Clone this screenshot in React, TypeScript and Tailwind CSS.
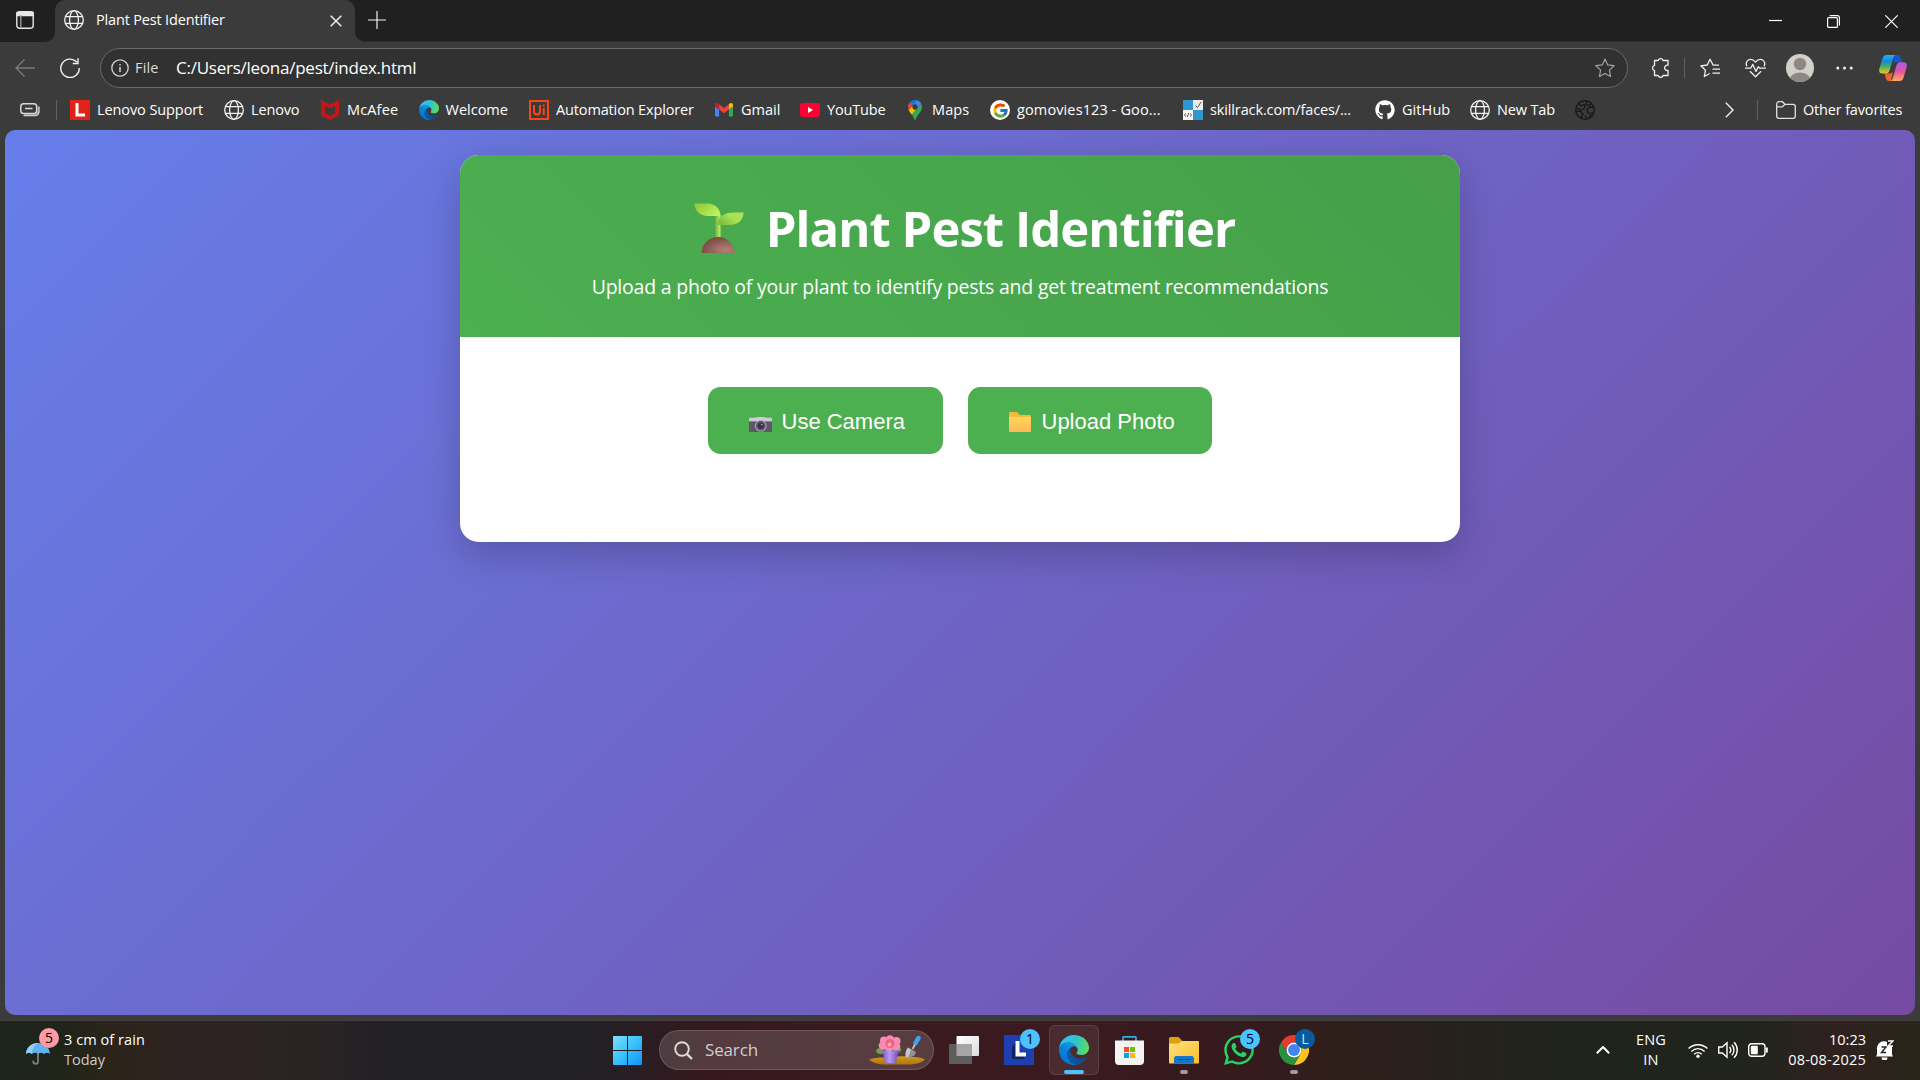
import React from "react";
import type { ReactNode } from "react";
import { FcGoogle } from "react-icons/fc";
import { FaGithub, FaWhatsapp } from "react-icons/fa";

function Label({ className = "", children }: { className?: string; children: ReactNode }) {
  return <span className={"whitespace-nowrap " + className}>{children}</span>;
}

function GlobeIcon() {
  return (
    <svg viewBox="0 0 20 20" className="size-5 shrink-0" fill="none" stroke="#f2f2f2" strokeWidth="1.3">
      <circle cx="10" cy="10" r="9.3" />
      <ellipse cx="10" cy="10" rx="4.4" ry="9.3" />
      <path d="M1.6 6.6h16.8M1.6 13.4h16.8" />
    </svg>
  );
}

function EdgeIcon({ className }: { className: string }) {
  return (
    <svg viewBox="0 0 256 256" className={className}>
      <defs>
        <linearGradient id="edgeA" x1="63" y1="178" x2="241" y2="178" gradientUnits="userSpaceOnUse">
          <stop offset="0" stopColor="#0c59a4" />
          <stop offset="1" stopColor="#114a8b" />
        </linearGradient>
        <linearGradient id="edgeB" x1="157" y1="100" x2="46" y2="221" gradientUnits="userSpaceOnUse">
          <stop offset="0" stopColor="#1b9de2" />
          <stop offset=".16" stopColor="#1595df" />
          <stop offset=".67" stopColor="#0680d7" />
          <stop offset="1" stopColor="#0078d4" />
        </linearGradient>
        <linearGradient id="edgeC" x1="20" y1="50" x2="250" y2="120" gradientUnits="userSpaceOnUse">
          <stop offset="0" stopColor="#35c1f1" />
          <stop offset=".45" stopColor="#2bc3d2" />
          <stop offset="1" stopColor="#5fdc5a" />
        </linearGradient>
      </defs>
      <path fill="url(#edgeA)" d="M231 190.5a93.7 93.7 0 0 1-10.5 4.7 101.9 101.9 0 0 1-35.9 6.5c-47.3 0-88.5-32.6-88.5-74.3a31.5 31.5 0 0 1 16.4-27.3c-42.8 1.8-53.8 46.4-53.8 72.5 0 73.9 68.1 81.4 82.8 81.4 7.9 0 19.8-2.3 27-4.6l1.3-.4a128.3 128.3 0 0 0 66.6-52.8 4 4 0 0 0-5.4-5.7z" />
      <path fill="url(#edgeB)" d="M105.7 241.4a79.2 79.2 0 0 1-22.7-21.3 80.7 80.7 0 0 1 29.5-120c3.2-1.5 8.5-4.1 15.6-4a32.4 32.4 0 0 1 25.7 13 31.9 31.9 0 0 1 6.3 18.7c0-.2 24.5-79.6-80-79.6-43.9 0-80 41.6-80 78.2a130.2 130.2 0 0 0 12.1 56 128 128 0 0 0 156.4 67 75.6 75.6 0 0 1-62.8-8z" />
      <path fill="url(#edgeC)" d="M152.3 148.9c-.8 1-3.3 2.5-3.3 5.6 0 2.6 1.7 5.1 4.7 7.2 14.4 10 41.5 8.7 41.6 8.7a59.6 59.6 0 0 0 30.3-8.3 61.4 61.4 0 0 0 30.4-52.9c.3-22.4-8-37.3-11.3-43.9C223.5 23.8 177.7 0 128 0A128 128 0 0 0 0 126.2c.5-36.5 36.8-66 80-66 3.5 0 23.5.3 42 10 16.3 8.6 24.9 19 30.9 29.2 6.1 10.7 7.2 24.2 7.2 29.5s-2.7 13.4-7.8 20z" />
    </svg>
  );
}

function GmailIcon() {
  return (
    <svg viewBox="52 42 88 66" className="w-[18px]">
      <path fill="#4285f4" d="M58 108h14V74L52 59v43c0 3.32 2.69 6 6 6" />
      <path fill="#34a853" d="M120 108h14c3.32 0 6-2.69 6-6V59l-20 15" />
      <path fill="#fbbc04" d="M120 48v26l20-15v-8c0-7.42-8.47-11.65-14.4-7.2" />
      <path fill="#ea4335" d="M72 74V48l24 18 24-18v26L96 92" />
      <path fill="#c5221f" d="M52 51v8l20 15V48l-5.6-4.2c-5.94-4.45-14.4-.22-14.4 7.2" />
    </svg>
  );
}

function MapsIcon() {
  return (
    <svg viewBox="0 0 92.3 132.3" className="h-5">
      <path fill="#1a73e8" d="M60.2 2.2C55.8.8 51 0 46.1 0 32 0 19.3 6.4 10.8 16.5l21.8 18.3L60.2 2.2z" />
      <path fill="#ea4335" d="M10.8 16.5C4.1 24.5 0 34.9 0 46.1c0 8.7 1.7 15.7 4.6 22l28-33.3-21.8-18.3z" />
      <path fill="#4285f4" d="M46.2 28.5c9.8 0 17.7 7.9 17.7 17.7 0 4.3-1.6 8.3-4.2 11.4 0 0 13.9-16.6 27.5-32.7-5.6-10.8-15.3-19-27-22.7L32.6 34.8c3.3-3.8 8.1-6.3 13.6-6.3" />
      <path fill="#fbbc04" d="M46.2 63.8c-9.8 0-17.7-7.9-17.7-17.7 0-4.3 1.5-8.3 4.1-11.3l-28 33.3c4.8 10.6 12.8 19.2 21 29.9l34.1-40.5c-3.3 3.9-8.1 6.3-13.5 6.3" />
      <path fill="#34a853" d="M59.1 109.2c15.4-24.1 33.3-35 33.3-63 0-7.7-1.9-14.9-5.2-21.3L25.6 98c2.6 3.4 5.3 7.3 7.9 11.3 9.4 14.5 6.8 23.1 12.8 23.1s3.4-8.7 12.8-23.2" />
    </svg>
  );
}

function Bookmark({ width, icon, children }: { width: string; icon: ReactNode; children?: ReactNode }) {
  return (
    <div className={"flex shrink-0 items-center gap-[7px] " + width}>
      <span className="flex size-5 shrink-0 items-center justify-center">{icon}</span>
      {children}
    </div>
  );
}

function TabStrip() {
  return (
    <div className="flex h-[42px] bg-[#3b3b3b]">
      <div className="flex w-[55px] items-start rounded-br-[10px] bg-[#202020] pt-[11px] pl-4">
        <svg viewBox="0 0 18 18" className="size-[18px]" fill="none" stroke="#e8e8e8" strokeWidth="1.4">
          <rect x=".8" y=".8" width="16.4" height="16.4" rx="2.6" />
          <path d="M1 1.5h16v3H1z" fill="#e8e8e8" />
          <path d="M4.8 4v13" stroke="#9a9a9a" />
        </svg>
      </div>
      <div className="w-[300px] bg-[#202020]">
        <div className="flex h-full items-center rounded-t-[10px] bg-[#3b3b3b] pr-[13px] pb-[3px] pl-[9px]">
          <GlobeIcon />
          <Label className="ml-3 text-[14.5px] tracking-[-0.17px] text-white">Plant Pest Identifier</Label>
          <svg viewBox="0 0 12 12" className="mt-[2px] ml-auto size-3" stroke="#f5f5f5" strokeWidth="1.4">
            <path d="M.7.7l10.6 10.6M11.3.7L.7 11.3" />
          </svg>
        </div>
      </div>
      <div className="flex flex-1 rounded-bl-[10px] border-b border-[#2e2e2e] bg-[#202020] pl-[13px]">
        <svg viewBox="0 0 18 18" className="mt-[11px] size-[18px]" stroke="#f0f0f0" strokeWidth="1.2">
          <path d="M9 0v18M0 9h18" />
        </svg>
        <div className="ml-auto flex pr-[22px]">
          <svg viewBox="0 0 13 13" className="mt-[14px] mr-[45px] size-[13px]" stroke="#fff" strokeWidth="1.2">
            <path d="M0 6.5h13" />
          </svg>
          <svg viewBox="0 0 13 13" className="mt-[15px] mr-[45px] size-[13px]" fill="none" stroke="#fff" strokeWidth="1.2">
            <rect x=".6" y="2.6" width="9.8" height="9.8" rx="1" />
            <path d="M2.6 .6h8a1.8 1.8 0 0 1 1.8 1.8v8" />
          </svg>
          <svg viewBox="0 0 13 13" className="mt-[15px] size-[13px]" stroke="#fff" strokeWidth="1.2">
            <path d="M.3.3l12.4 12.4M12.7.3L.3 12.7" />
          </svg>
        </div>
      </div>
    </div>
  );
}

function CopilotIcon() {
  return (
    <svg viewBox="0 0 28 26" className="h-[26px] w-7">
      <defs>
        <linearGradient id="copA" x1="0" y1="0" x2="0" y2="1">
          <stop offset="0" stopColor="#1fb2f5" />
          <stop offset=".35" stopColor="#1a86d8" />
          <stop offset=".65" stopColor="#4fb35a" />
          <stop offset="1" stopColor="#f4c81e" />
        </linearGradient>
        <linearGradient id="copB" x1="0" y1="0" x2="0" y2="1">
          <stop offset="0" stopColor="#a45cf0" />
          <stop offset=".5" stopColor="#e8569b" />
          <stop offset="1" stopColor="#ffab66" />
        </linearGradient>
      </defs>
      <path fill="#1556c8" d="M15 0h3.5c1.7 0 2.7 1 3.2 2.6L23.2 7h-5.5c-2 0-3 1-3.5 2.5z" />
      <path fill="#f0652f" d="M5.5 18.5h5.3c1.9 0 2.9-1 3.4-2.7L12 26h-2c-1.7 0-2.7-1-3.2-2.7z" />
      <path fill="url(#copA)" d="M7.5 0H17c-1.5.3-2.2 1.2-2.7 2.8L10.5 15.5c-.6 2-1.7 3-3.6 3H3.5c-2.7 0-3.9-1.7-3.2-4.5L3.5 3.3C4.2 1.1 5.5 0 7.5 0z" />
      <path fill="url(#copB)" d="M20.5 26H11c1.5-.3 2.2-1.2 2.7-2.8L17.5 10.2c.6-2 1.7-3 3.6-3h3.4c2.7 0 3.9 1.9 3.2 4.7l-3.2 10.8c-.7 2.2-2 3.3-4 3.3z" />
    </svg>
  );
}

function Toolbar() {
  return (
    <div className="flex h-12 items-center bg-[#3b3b3b] pt-1">
      <svg viewBox="0 0 20 18" className="ml-[15px] h-[18px] w-5" fill="none" stroke="#7c7c7c" strokeWidth="1.3">
        <path d="M20 9H1M9.5.5L1 9l8.5 8.5" />
      </svg>
      <svg viewBox="0 0 20 20" className="ml-[25px] size-5" fill="none" stroke="#f2f2f2" strokeWidth="1.4">
        <path d="M16.7 4A9.2 9.2 0 1 0 19.2 10M18 .2v5.3h-5.3" />
      </svg>
      <div className="ml-5 flex h-10 w-[1528px] items-center rounded-full border border-[#6a6a6a] bg-[#313131] pr-3 pl-[10px]">
        <svg viewBox="0 0 18 18" className="size-[18px]" fill="none" stroke="#d6d6d6" strokeWidth="1.3">
          <circle cx="9" cy="9" r="8.2" />
          <path d="M9 8v5M9 5v1.6" strokeWidth="1.5" />
        </svg>
        <Label className="ml-[6px] text-[14.5px] font-medium tracking-[0.15px] text-[#dcdcdc]">File</Label>
        <Label className="ml-[17.5px] text-[17px] tracking-[-0.25px] text-white">C:/Users/leona/pest/index.html</Label>
        <svg viewBox="0 0 20 20" className="ml-auto size-5" fill="none" stroke="#a2a2a2" strokeWidth="1.2" strokeLinejoin="round">
          <path d="M10 1l2.7 5.9 6.4.8-4.7 4.4 1.2 6.4L10 15.4l-5.6 3.1 1.2-6.4L.9 7.7l6.4-.8z" />
        </svg>
      </div>
      <svg viewBox="0 0 20 20" className="ml-[22px] size-5" fill="none" stroke="#f0f0f0" strokeWidth="1.3" strokeLinejoin="round">
        <path d="M4.5 2.5h3.6a2.6 2.6 0 0 1 5 0H18v4.7a2.7 2.7 0 1 0 0 5.2v5.1h-4.9a2.6 2.6 0 0 1-5 0H4.5v-4.9a2.7 2.7 0 0 1 0-5.2z" />
      </svg>
      <span className="ml-[14px] h-5 w-px bg-[#606060]" />
      <svg viewBox="0 0 20 20" className="ml-[15px] size-5" fill="none" stroke="#f0f0f0" strokeWidth="1.3" strokeLinejoin="round">
        <path d="M19 7.2h-5.8L10 1.2 7.3 7l-6.5.8 4.7 4.4-1.2 6.3 5.3-3M12.5 11.2H20M12.5 15.2H20" />
      </svg>
      <svg viewBox="0 0 21 20" className="ml-[25px] h-5 w-[21px]" fill="none" stroke="#f0f0f0" strokeWidth="1.3" strokeLinejoin="round">
        <path d="M1.8 8.3C.2 4.5 2.4 1.6 5.4 1.4c2.2-.1 3.8 1.1 5.1 2.7 1.3-1.6 2.9-2.8 5.1-2.7 3 .2 5.2 3.1 3.6 6.9M0 10.2h5.7l2.1-3.8 3.2 7 2.3-4.7 1.2 1.5H21M5 13.2l5.5 5.5 5.5-5.5" />
      </svg>
      <svg viewBox="0 0 28 28" className="ml-5 size-7">
        <clipPath id="avatar"><circle cx="14" cy="14" r="14" /></clipPath>
        <g clipPath="url(#avatar)">
          <rect width="28" height="28" fill="#d3cfca" />
          <circle cx="14" cy="10" r="6.2" fill="#8d8883" />
          <ellipse cx="14" cy="26" rx="10.5" ry="7.5" fill="#8d8883" />
        </g>
      </svg>
      <svg viewBox="0 0 17 4" className="ml-[22px] h-1 w-[17px]" fill="#f0f0f0">
        <circle cx="1.8" cy="2" r="1.5" /><circle cx="8.5" cy="2" r="1.5" /><circle cx="15.2" cy="2" r="1.5" />
      </svg>
      <span className="ml-[26px]"><CopilotIcon /></span>
    </div>
  );
}

function BookmarksBar() {
  return (
    <div className="flex h-10 items-center bg-[#3b3b3b] text-[14.5px] text-white">
      <svg viewBox="0 0 20 14" className="ml-5 h-[14px] w-5" fill="none" stroke="#d8d8d8" strokeWidth="1.5">
        <rect x=".8" y=".8" width="15.9" height="9.8" rx="2.8" />
        <path d="M5 5.6h7.5M3.500 12.600h11.500a3.800 3.800 0 0 0 3.900-3.800V3.500" />
        <path d="M4 11.700h10.500a3.500 3.500 0 0 0 3.500-3.500V4" strokeWidth="1" stroke="#a8a8a8" />
      </svg>
      <span className="ml-4 h-5 w-px bg-[#606060]" />
      <span className="w-[13px]" />
      <Bookmark width="w-[154px]" icon={
        <svg viewBox="0 0 20 20" className="size-5"><rect width="20" height="20" fill="#e2231a" /><path d="M7 3v12h8" fill="none" stroke="#fff" strokeWidth="3" /></svg>
      }><Label className="tracking-[-0.09px]">Lenovo Support</Label></Bookmark>
      <Bookmark width="w-[96px]" icon={<GlobeIcon />}><Label className="tracking-[-0.15px]">Lenovo</Label></Bookmark>
      <Bookmark width="w-[98.5px]" icon={
        <svg viewBox="0 0 18 20" className="h-5 w-[18px]"><path fill="#c01818" d="M0 0l9 4.3L18 0v15.5L9 20 0 15.5zM4 6v7.2L9 15.6l5-2.400V6L9 8.3z" fillRule="evenodd" /></svg>
      }><Label className="tracking-[0.15px]">McAfee</Label></Bookmark>
      <Bookmark width="w-[110.5px]" icon={<EdgeIcon className="size-5" />}><Label>Welcome</Label></Bookmark>
      <Bookmark width="w-[185px]" icon={
        <svg viewBox="0 0 20 20" className="size-5" fill="none" stroke="#fa4616"><rect x="1" y="1" width="18" height="18" strokeWidth="2" /><path d="M5 5v6.5a3 3 0 0 0 6 0V5M14.7 8v7M14.7 4.5v2" strokeWidth="2" /></svg>
      }><Label className="tracking-[-0.14px]">Automation Explorer</Label></Bookmark>
      <Bookmark width="w-[86px]" icon={<GmailIcon />}><Label>Gmail</Label></Bookmark>
      <Bookmark width="w-[105px]" icon={
        <svg viewBox="0 0 20 14" className="h-[14px] w-5"><rect width="20" height="14" rx="3" fill="#ff0033" /><path fill="#fff" d="M8 4l5 3-5 3z" /></svg>
      }><Label className="tracking-[-0.16px]">YouTube</Label></Bookmark>
      <Bookmark width="w-[85px]" icon={<MapsIcon />}><Label className="tracking-[0.12px]">Maps</Label></Bookmark>
      <Bookmark width="w-[193px]" icon={<span className="flex size-5 items-center justify-center rounded-full bg-white"><FcGoogle size={17} /></span>}><Label className="tracking-[0.12px]">gomovies123 - Goo...</Label></Bookmark>
      <Bookmark width="w-[192px]" icon={
        <svg viewBox="0 0 20 20" className="size-5">
          <rect width="20" height="20" fill="#2f96cf" /><rect x="10" width="10" height="10" fill="#ececec" /><rect y="10" width="10" height="10" fill="#f4f4f4" />
          <path d="M12.5 5.500l2 2 3.500-5.500M3 13.500L1.300 15 3 16.500M7 13.500L8.700 15 7 16.500M5.600 13l-1.200 4" fill="none" stroke="#555" />
        </svg>
      }><Label className="tracking-[-0.13px]">skillrack.com/faces/...</Label></Bookmark>
      <Bookmark width="w-[95px]" icon={<FaGithub size={20} />}><Label className="tracking-[0.08px]">GitHub</Label></Bookmark>
      <Bookmark width="w-[105px]" icon={<GlobeIcon />}><Label className="tracking-[-0.14px]">New Tab</Label></Bookmark>
      <Bookmark width="w-5" icon={
        <svg viewBox="0 0 20 20" className="size-5" fill="none" stroke="#161616" strokeWidth="1.3">
          <circle cx="10" cy="10" r="9.3" />
          <path d="M4 3.5l2 2.500 3-1.500 1.500 1.800-2 2.700-3 1-3.500-2M2 11l4 .5 2 2.500-1.500 2 .5 2.500M12 1l-1 3 2.500 1.500 3-1.500M18.500 7.500l-3.500-.5-3 2.500 1 3.500 2.500 1-.5 3.500M18.500 12l-2.500 1M10 15.500l1.500 3" />
        </svg>
      } />
      <svg viewBox="0 0 9 16" className="ml-[130px] h-4 w-[9px]" fill="none" stroke="#f0f0f0" strokeWidth="1.4"><path d="M.8.8L8 8l-7.2 7.2" /></svg>
      <span className="ml-[23px] h-5 w-px bg-[#606060]" />
      <svg viewBox="0 0 20 18" className="ml-[18px] h-[18px] w-5" fill="none" stroke="#e2e2e2" strokeWidth="1.3">
        <path d="M.7 3A2.3 2.3 0 0 1 3 .7h3.400L9 3.300h8A2.300 2.300 0 0 1 19.300 5.600V15a2.300 2.300 0 0 1-2.300 2.300H3A2.300 2.300 0 0 1 .7 15zM.7 5.900h5.600L9 3.300" />
      </svg>
      <Label className="ml-[7px] tracking-[-0.17px]">Other favorites</Label>
    </div>
  );
}

function SproutIcon() {
  return (
    <svg viewBox="0 0 50 50" className="size-[50px]">
      <defs>
        <linearGradient id="leafL" x1="0" y1="0" x2="1" y2=".6"><stop offset="0" stopColor="#8cc63a" /><stop offset=".3" stopColor="#9ad13c" /><stop offset="1" stopColor="#bdf25c" /></linearGradient>
        <linearGradient id="leafR" x1="0" y1=".6" x2="1" y2="0"><stop offset="0" stopColor="#7fbf45" /><stop offset=".5" stopColor="#a5e350" /><stop offset="1" stopColor="#b6dc66" /></linearGradient>
        <linearGradient id="stem" x1="0" x2="1"><stop offset="0" stopColor="#78b843" /><stop offset="1" stopColor="#c3f060" /></linearGradient>
        <radialGradient id="soil" cx=".75" cy=".8" r=".8"><stop offset="0" stopColor="#b5807a" /><stop offset="1" stopColor="#7a4a44" /></radialGradient>
      </defs>
      <path fill="url(#stem)" d="M21.5 12h5v24h-5z" />
      <path fill="url(#leafL)" d="M.5.5h13C21 .5 26.5 5.500 26.500 13H14C6 13 .5 8 .5.5z" />
      <path fill="url(#leafR)" d="M49.5 9.500H39c-8 0-15.500 4-15.500 12.500H36c8 0 13.500-5 13.500-12.500z" />
      <path fill="url(#soil)" d="M7.500 50a16.500 16 0 0 1 33 0z" />
    </svg>
  );
}

function CameraIcon() {
  return (
    <svg viewBox="0 0 23 15" className="mt-[7px] h-[15px] w-[23px]">
      <rect y="1" width="23" height="14" rx="1" fill="#5d5768" />
      <path fill="#cfc9dc" d="M0 4V1.500A1 1 0 0 1 1 .7h5.500L8 0h7l1.500.7H22a1 1 0 0 1 1 .8V4z" />
      <rect y="4" width="23" height="1" fill="#8a8398" />
      <circle cx="11.8" cy="8.8" r="5.8" fill="#b5adbf" />
      <circle cx="11.8" cy="8.8" r="4.8" fill="#5a5366" />
      <circle cx="11.8" cy="8.8" r="3" fill="#39323f" />
      <circle cx="12.8" cy="7.6" r=".9" fill="#a9a0b8" />
    </svg>
  );
}

function FolderIcon() {
  return (
    <svg viewBox="0 0 22 20" className="mt-[3px] h-5 w-[22px]">
      <defs><linearGradient id="fold" x1="0" y1="0" x2="0" y2="1"><stop offset="0" stopColor="#ffd84e" /><stop offset="1" stopColor="#ffb75e" /></linearGradient></defs>
      <path fill="#f6b93f" d="M0 1a1 1 0 0 1 1-1h7l3 3h10a1 1 0 0 1 1 1v3H0z" />
      <path fill="url(#fold)" d="M0 5h22v14a1 1 0 0 1-1 1H1a1 1 0 0 1-1-1z" />
    </svg>
  );
}

function Page() {
  return (
    <div className="h-[890px] bg-[#3b3b3b] px-[5px] pb-[5px]">
      <main className="flex h-[885px] justify-center rounded-[10px] bg-[linear-gradient(135deg,#667eea_0%,#764ba2_100%)] pt-[25px]">
        <section className="h-[387px] w-[1000px] overflow-hidden rounded-[18.75px] bg-white shadow-[0_12.5px_37.5px_rgba(0,0,0,0.2)]">
          <header className="h-[182px] bg-[linear-gradient(45deg,#4caf50,#45a049)] pt-[39px] text-center text-white">
            <h1 className="flex h-[68px] items-center justify-center text-[49px] leading-[68px] font-bold">
              <span className="mr-[22px] ml-[9px]"><SproutIcon /></span>
              <Label className="tracking-[-0.95px]">Plant Pest Identifier</Label>
            </h1>
            <p className="mt-[10px] text-[19.5px] leading-[30px]">
              <Label className="tracking-[-0.22px]">Upload a photo of your plant to identify pests and get treatment recommendations</Label>
            </p>
          </header>
          <div className="flex justify-center gap-[25px] pt-[50px] font-['Liberation_Sans',Arial,sans-serif] text-[22px] text-white">
            <button className="flex h-[67px] w-[235px] items-center rounded-[12.5px] bg-[#4caf50] pl-[41px]">
              <CameraIcon /><span className="mt-[2px] ml-[9.5px]">Use Camera</span>
            </button>
            <button className="flex h-[67px] w-[244px] items-center rounded-[12.5px] bg-[#4caf50] pl-[41px]">
              <FolderIcon /><span className="mt-[2px] ml-[10.5px]">Upload Photo</span>
            </button>
          </div>
        </section>
      </main>
    </div>
  );
}

function AppCell({ children, badge, badgeClass = "bg-[#4cc2ff] text-black", mark }: { children: ReactNode; badge?: string; badgeClass?: string; mark?: "active" | "open" }) {
  return (
    <div className="flex w-[55px] justify-center">
      <div className={mark === "active" ? "relative flex size-[50px] items-center justify-center rounded-md border border-white/10 bg-white/8" : "relative flex size-[50px] items-center justify-center"}>
        {children}
        {badge && <span className={"absolute top-1 right-1 flex size-5 items-center justify-center rounded-full text-[14px] leading-none " + badgeClass}>{badge}</span>}
        {mark === "active" && <span className="absolute bottom-0 h-1 w-5 rounded-full bg-[#4cc2ff]" />}
        {mark === "open" && <span className="absolute bottom-[1px] h-1 w-2 rounded-full bg-[#a39a9c]" />}
      </div>
    </div>
  );
}

function FlowerArt() {
  return (
    <svg viewBox="0 0 56 30" className="h-[30px] w-14">
      <defs>
        <linearGradient id="pot" x1="0" x2="1"><stop offset="0" stopColor="#7f5fd0" /><stop offset=".45" stopColor="#b99af0" /><stop offset="1" stopColor="#7450c4" /></linearGradient>
        <linearGradient id="ground" x1="0" y1="0" x2="0" y2="1"><stop offset="0" stopColor="#d29a1c" /><stop offset="1" stopColor="#b0750f" /></linearGradient>
      </defs>
      <path fill="url(#ground)" d="M0 24.500C4 23 10 22.500 15 22.500c8 0 14-2 22-1 8 .5 14 .5 19 3-3 3-9 5-18 5H18C9 29.500 3 27.500 0 24.500z" />
      <path fill="#63a83a" d="M7 17c0-4 4-5 7-3l3 4c-4 2-8 1-10-1zM32.500 15c-1-4-5-4-7-2l-2 4c3 2 7 1 9-2z" />
      <g fill="#f98bb2">
        <circle cx="21" cy="4.500" r="4.300" /><circle cx="27.500" cy="6" r="4" /><circle cx="27" cy="11.500" r="4.300" /><circle cx="20" cy="13" r="4" /><circle cx="14" cy="10.500" r="4.300" /><circle cx="15" cy="5.500" r="4" />
      </g>
      <circle cx="21" cy="8.500" r="4.500" fill="#ee5f92" />
      <circle cx="20.500" cy="9.500" r="2" fill="#f8c05a" />
      <path fill="url(#pot)" d="M14 17.500h15l-2 10.500H16z" />
      <path fill="url(#pot)" d="M13 15.500h17v3H13z" />
      <path d="M49.500 3l-3 5" stroke="#38a6ee" strokeWidth="4.400" strokeLinecap="round" />
      <path d="M46 9.500l-2.500 4.500" stroke="#c8c8c8" strokeWidth="1.600" />
      <path fill="#c3c6ca" d="M39 12.500l7.500 4.500c0 3-3 5-10 5-.5-4 .5-7.500 2.500-9.500z" />
      <path fill="#8e9297" d="M42 14.500l4.500 2.500c0 3-3 5-7 5z" />
    </svg>
  );
}

function Taskbar() {
  return (
    <footer className="flex h-[60px] items-center border-t border-[#453f40] bg-[linear-gradient(90deg,#1d241b_0px,#1f2419_60px,#2b2419_110px,#2d2322_180px,#2b2323_300px,#212025_400px,#222025_600px,#35191e_700px,#3a1a1f_850px,#3b1a1f_1050px,#351a1e_1250px,#2f1f1b_1335px,#26211c_1450px,#20241c_1560px,#22241c_1760px,#30211e_1840px,#28241a_1900px,#28241a_1920px)] pb-px text-white">
      <div className="flex w-[600px] items-center pl-[26px]">
        <div className="relative h-[28px] w-[32px]">
          <svg viewBox="0 0 24 24" className="mt-[6px] size-6">
            <path d="M12 10v9.500a2.300 2.300 0 0 1-4.700 0v-.8" fill="none" stroke="#7d8080" strokeWidth="1.800" />
            <path fill="#5fb2ef" d="M0 12C.5 5 5.500 1 12 1s11.500 4 12 11c-2-1.700-4-1.700-6 0-2-1.700-4-1.700-6 0-2-1.700-4-1.700-6 0-2-1.700-4-1.700-6 0z" />
            <path fill="#8fd0fb" d="M0 12C.5 5 5.500 1 12 1 8 3.500 6 7 6 12c-2-1.700-4-1.700-6 0z" />
          </svg>
          <span className="absolute top-[-8px] left-[13px] flex size-5 items-center justify-center rounded-full bg-[#ff99a4] text-[14px] leading-none text-black">5</span>
        </div>
        <div className="ml-[6px] flex flex-col items-start text-[14.5px] leading-5">
          <Label className="tracking-[0.07px]">3 cm of rain</Label>
          <Label className="text-[#cfcbc9]">Today</Label>
        </div>
      </div>
      <svg viewBox="0 0 29 29" className="ml-[13px] size-[29px]">
        <defs><linearGradient id="win" x1="0" y1="0" x2="1" y2="1"><stop offset="0" stopColor="#7fe0ff" /><stop offset=".5" stopColor="#38c1fb" /><stop offset="1" stopColor="#0f93f5" /></linearGradient></defs>
        <path fill="url(#win)" d="M0 1a1 1 0 0 1 1-1h13v14H0zM15 0h13a1 1 0 0 1 1 1v13H15zM0 15h14v14H1a1 1 0 0 1-1-1zM15 15h14v13a1 1 0 0 1-1 1H15z" />
      </svg>
      <div className="ml-[17px] flex h-10 w-[275px] items-center rounded-full border border-white/15 bg-white/15 pr-2 pl-[14px]">
        <svg viewBox="0 0 19 19" className="size-[19px]" fill="none" stroke="#dfdadb"><circle cx="8" cy="8" r="6.800" strokeWidth="1.900" /><path d="M12.800 12.800l5.200 5.200" strokeWidth="2.400" /></svg>
        <Label className="ml-3 text-[17px] tracking-[-0.15px] text-[#d3cbcc]">Search</Label>
        <span className="ml-auto"><FlowerArt /></span>
      </div>
      <div className="ml-[2.5px] flex">
        <AppCell>
          <svg viewBox="0 0 30 28" className="h-7 w-[30px]">
            <defs><linearGradient id="tv" x1="0" y1="0" x2="1" y2="1"><stop offset="0" stopColor="#fff" /><stop offset="1" stopColor="#dcdcdc" /></linearGradient></defs>
            <rect x="7.500" width="22.500" height="20" rx="1" fill="url(#tv)" />
            <rect y="8" width="23" height="20" rx="1" fill="#5d5d5d" />
            <rect x="7.500" y="8" width="15.500" height="12" fill="#a8a5a5" />
          </svg>
        </AppCell>
        <AppCell badge="1">
          <svg viewBox="0 0 30 30" className="size-[30px]"><rect width="30" height="30" fill="#1f3fb0" /><path fill="#0d2666" d="M8 23l4-3h10l-2 4H8zM8 23V12l4-5v14z" /><path d="M13.500 6v13.500H22" fill="none" stroke="#fff" strokeWidth="4" /></svg>
        </AppCell>
        <AppCell mark="active"><EdgeIcon className="size-[30px]" /></AppCell>
        <AppCell>
          <svg viewBox="0 0 29 29" className="size-[29px]">
            <path d="M8 5V1.700A1 1 0 0 1 9 .8h11a1 1 0 0 1 1 .9V5" fill="none" stroke="#27b0e8" strokeWidth="1.700" />
            <path fill="#f3f3f3" d="M0 4.500h29V25a4 4 0 0 1-4 4H4a4 4 0 0 1-4-4z" />
            <path fill="#f25022" d="M9 11h5v5H9z" /><path fill="#7fba00" d="M15 11h5v5h-5z" /><path fill="#00a4ef" d="M9 17h5v5H9z" /><path fill="#ffb900" d="M15 17h5v5h-5z" />
          </svg>
        </AppCell>
        <AppCell mark="open">
          <svg viewBox="0 0 30 27" className="h-[27px] w-[30px]">
            <defs><linearGradient id="exp" x1="0" y1="0" x2="1" y2="1"><stop offset="0" stopColor="#ffe07a" /><stop offset="1" stopColor="#fbbf2d" /></linearGradient></defs>
            <path fill="#e0a00f" d="M0 1.500A1.500 1.500 0 0 1 1.500 0h8l3.500 3.500V10H0z" />
            <path fill="url(#exp)" d="M0 6.500h10L13 4h16a1 1 0 0 1 1 1v20.500a1 1 0 0 1-1 1H1a1 1 0 0 1-1-1z" />
            <path fill="#1376c9" d="M5 26.500V21.500A2.500 2.500 0 0 1 7.500 19h15a2.500 2.500 0 0 1 2.500 2.500v5z" />
            <path d="M8.500 22.500h13" stroke="#0d4f8f" />
          </svg>
        </AppCell>
        <AppCell badge="5"><FaWhatsapp size={34} color="#25d366" /></AppCell>
        <AppCell badge="L" badgeClass="bg-[#0c5a9e] text-[#cfe0ee]" mark="open">
          <svg viewBox="0 0 48 48" className="size-[30px]">
            <path fill="#e33b2e" d="M24 12h20.800A24 24 0 0 0 3.200 12l10.400 18A12 12 0 0 1 24 12z" />
            <path fill="#fcc31e" d="M34.400 30L24 48a24 24 0 0 0 20.800-36H24a12 12 0 0 1 10.400 18z" />
            <path fill="#27933f" d="M13.600 30L3.200 12A24 24 0 0 0 24 48l10.400-18a12 12 0 0 1-20.800 0z" />
            <circle cx="24" cy="24" r="12" fill="#fff" /><circle cx="24" cy="24" r="9.500" fill="#4285f4" />
          </svg>
        </AppCell>
      </div>
      <div className="ml-auto flex items-center pr-[26px]">
        <svg viewBox="0 0 14 8" className="h-2 w-[14px]" fill="none" stroke="#fff" strokeWidth="2"><path d="M.8 7.200L7 1l6.200 6.200" /></svg>
        <div className="ml-[26px] flex w-[30px] flex-col items-center text-[14.5px] leading-5"><Label className="tracking-[0.1px]">ENG</Label><Label className="tracking-[0.3px]">IN</Label></div>
        <svg viewBox="0 0 20 15" className="ml-[22px] h-[15px] w-5" fill="none" stroke="#fff" strokeWidth="1.400">
          <path d="M.6 5.600a13.300 13.300 0 0 1 18.800 0M3.400 8.400a9.300 9.300 0 0 1 13.200 0M6.200 11.200a5.400 5.400 0 0 1 7.600 0" /><circle cx="10" cy="13.200" r="1.700" fill="#fff" stroke="none" />
        </svg>
        <svg viewBox="0 0 20 18" className="ml-[10px] h-[18px] w-5" fill="none" stroke="#fff" strokeWidth="1.400">
          <path d="M.7 6h3.600L9 1.800v14.400L4.300 12H.7zM11.500 6a4.500 4.500 0 0 1 0 6M13.800 3.700a7.500 7.500 0 0 1 0 10.600M16 1.200a11 11 0 0 1 0 15.600" />
        </svg>
        <svg viewBox="0 0 20 14" className="ml-[10px] h-[14px] w-5" fill="none" stroke="#fff" strokeWidth="1.400">
          <rect x=".7" y=".7" width="16.300" height="12.600" rx="3" /><rect x="2.800" y="2.800" width="7" height="8.400" rx="1" fill="#fff" stroke="none" /><path d="M18.800 4.500v5" strokeWidth="2" />
        </svg>
        <div className="ml-5 flex w-[78px] flex-col items-end text-[14.5px] leading-5"><Label>10:23</Label><Label className="tracking-[0.22px]">08-08-2025</Label></div>
        <svg viewBox="0 0 18 20" className="ml-[10px] h-5 w-[18px]">
          <path fill="#fff" d="M1 14.500V8a7.300 7.300 0 0 1 10-6.300V6h5v8.500l1 2H0zM5.500 17.500h6a3 3 0 0 1-6 0z" />
          <path d="M5.500 7h4.500l-4.500 5.500h4.500" fill="none" stroke="#222" strokeWidth="1.400" /><path d="M12 1h5l-5 5h5" fill="none" stroke="#fff" strokeWidth="1.400" />
        </svg>
      </div>
    </footer>
  );
}

export default function App() {
  return (
    <div className="flex h-[1080px] w-[1920px] flex-col overflow-hidden bg-[#3b3b3b] font-['Open_Sans',sans-serif]">
      <TabStrip />
      <Toolbar />
      <BookmarksBar />
      <Page />
      <Taskbar />
    </div>
  );
}
